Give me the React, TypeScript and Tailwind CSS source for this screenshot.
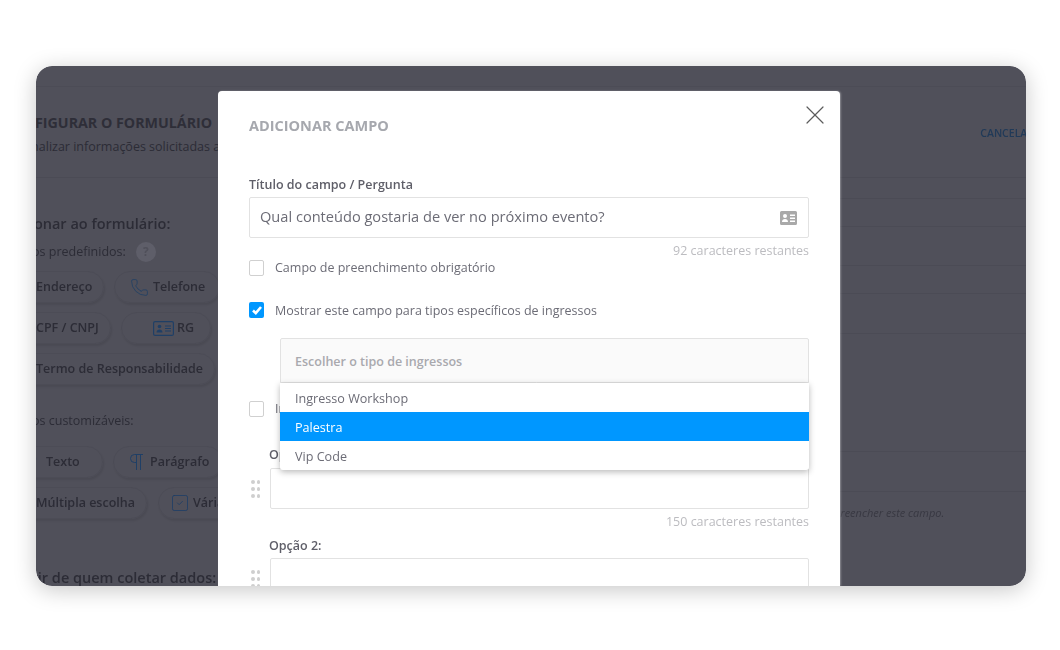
import { Phone, SquareCheck, Type, X } from 'lucide-react';
import type { ReactNode } from 'react';

const IdCard = ({ className }: { className?: string }) => (
  <svg viewBox="0 0 17 14" className={className}>
    <path
      fill="currentColor"
      fillRule="evenodd"
      d="M1.5 0h14A1.5 1.5 0 0 1 17 1.5v11a1.5 1.5 0 0 1-1.5 1.5h-14A1.5 1.5 0 0 1 0 12.5v-11A1.5 1.5 0 0 1 1.5 0ZM5 3a2 2 0 1 0 0 4 2 2 0 0 0 0-4ZM2 11h6c0-2-1.200-3-3-3s-3 1-3 3Zm8-7.500V5h5V3.500h-5ZM10 6.500V8h5V6.500h-5ZM10 9.500V11h5V9.500h-5Z"
    />
  </svg>
);

const IdCardOutline = () => (
  <svg viewBox="0 0 21 15" className="h-[15px] w-[21px] text-[#1f3f66]" fill="none" stroke="currentColor">
    <rect x="0.6" y="0.6" width="19.800" height="13.800" rx="1.500" strokeWidth="1.200" />
    <circle cx="6.500" cy="5.500" r="1.800" fill="currentColor" stroke="none" />
    <path d="M3.500 11.500c0-2 1.300-3 3-3s3 1 3 3z" fill="currentColor" stroke="none" />
    <path d="M12 5h6M12 7.500h6M12 10h6" strokeWidth="1.100" />
  </svg>
);

const PilcrowThin = () => (
  <svg viewBox="0 0 13 16" className="h-[16px] w-[13px] text-[#1f3f66]" fill="none" stroke="currentColor" strokeWidth="1">
    <path d="M13 .5H4.500a4 4 0 0 0 0 8H6.500M6.500 .5V16M10.500 .5V16" />
  </svg>
);

const Pill = ({ children, className }: { children: ReactNode; className: string }) => (
  <div
    className={`flex h-[32px] shrink-0 items-center rounded-full border border-[#4c4c56] text-[12.500px] font-semibold whitespace-nowrap shadow-[1px_2px_2px_rgba(0,0,0,0.08)] ${className}`}
  >
    {children}
  </div>
);

const DragDots = () => (
  <div className="grid w-[9px] shrink-0 grid-cols-2 gap-x-[2px] gap-y-[3px]">
    {Array.from({ length: 6 }).map((_, i) => (
      <span key={i} className="h-[4px] w-[3.500px] rounded-full bg-[#cfcfcf]" />
    ))}
  </div>
);

const Checkbox = ({ checked }: { checked?: boolean }) =>
  checked ? (
    <span className="flex h-[16px] w-[15px] shrink-0 items-center justify-center rounded-[2px] bg-[#0097ff]">
      <svg viewBox="0 0 12 12" className="h-[12px] w-[12px]" fill="none" stroke="#fff" strokeWidth="2.600">
        <path d="M2 6.500 4.800 9.200 10 3" />
      </svg>
    </span>
  ) : (
    <span className="h-[16px] w-[15px] shrink-0 rounded-[2px] border border-[#d0d0d0] bg-white" />
  );

const Background = () => (
  <div className="flex h-full flex-col bg-[#50505a] text-[#2c2c36] blur-[0.5px]">
    <div className="h-[21px] shrink-0 border-b border-[#4c4c56]" />
    <div className="flex h-[91px] shrink-0 items-start justify-between border-b border-[#4b4b55] pt-[26px]">
      <div className="overflow-hidden">
        <p className="-ml-[33px] whitespace-nowrap text-[14.250px] leading-[20px] font-bold text-[#2e2e38]">
          CONFIGURAR O FORMULÁRIO
        </p>
        <p className="-ml-[38px] mt-[5px] whitespace-nowrap text-[12.500px] leading-[18px]">
          Personalizar informações solicitadas aos participantes
        </p>
      </div>
      <span className="mt-[13px] -mr-[8px] text-[10.500px] leading-[14px] font-semibold text-[#213a58]">CANCELAR</span>
    </div>

    <div className="flex min-h-0 flex-1">
      <div className="w-[182px] shrink-0 overflow-hidden">
        <p className="-ml-[36px] mt-[35px] whitespace-nowrap text-[14.500px] leading-[22px] font-semibold">
          Adicionar ao formulário:
        </p>
        <div className="mt-[7px] flex items-center gap-[10px]">
          <p className="-ml-[38px] whitespace-nowrap text-[12.500px] leading-[20px]">Campos predefinidos:</p>
          <span className="flex h-[20px] w-[20px] items-center justify-center rounded-full bg-[#5e5e69] text-[12px] font-bold text-[#50505a]">
            ?
          </span>
        </div>
        <div className="-ml-[30px] mt-[9px] flex gap-[10px]">
          <Pill className="w-[98px] pl-[29px]">Endereço</Pill>
          <Pill className="w-[106px] gap-[4px] pl-[15px]">
            <Phone className="h-[19px] w-[19px] shrink-0 text-[#1f3f66]" strokeWidth={1} />
            Telefone
          </Pill>
        </div>
        <div className="-ml-[30px] mt-[9px] flex gap-[10px]">
          <Pill className="w-[105px] pl-[29px]">CPF / CNPJ</Pill>
          <Pill className="w-[90px] gap-[3px] pl-[31px]">
            <IdCardOutline />
            RG
          </Pill>
        </div>
        <div className="-ml-[30px] mt-[9px] flex">
          <Pill className="w-[209px] pl-[29px]">Termo de Responsabilidade</Pill>
        </div>
        <p className="-ml-[38px] mt-[26px] whitespace-nowrap text-[12.500px] leading-[20px]">Campos customizáveis:</p>
        <div className="-ml-[30px] mt-[15px] flex gap-[10px]">
          <Pill className="w-[97px] gap-[8px] pl-[17px]">
            <Type className="h-[14px] w-[14px] shrink-0 text-[#1f3f66]" strokeWidth={1.300} />
            Texto
          </Pill>
          <Pill className="w-[110px] gap-[7px] pl-[16px]">
            <PilcrowThin />
            Parágrafo
          </Pill>
        </div>
        <div className="-ml-[30px] mt-[9px] flex gap-[11px]">
          <Pill className="w-[141px] pl-[29px]">Múltipla escolha</Pill>
          <Pill className="w-[130px] gap-[3px] pl-[11px]">
            <SquareCheck className="h-[20px] w-[20px] shrink-0 text-[#1f3f66]" strokeWidth={1} />
            Várias opções
          </Pill>
        </div>
        <p className="-ml-[41px] mt-[48px] whitespace-nowrap text-[14.500px] leading-[22px] font-semibold">
          A partir de quem coletar dados:
        </p>
      </div>

      <div className="min-w-0 flex-1 overflow-hidden">
        <div className="h-[21px] border-b border-[#4b4b55]" />
        <div className="h-[28px] border-b border-[#4b4b55]" />
        <div className="h-[39px] border-b border-[#4b4b55]" />
        <div className="h-[28px] border-b border-[#4b4b55]" />
        <div className="h-[40px] border-b border-[#4b4b55]" />
        <div className="h-[118px] border-b border-[#4b4b55]" />
        <div className="h-[40px] border-b border-[#4b4b55]" />
        <p className="mt-[13px] ml-[527px] text-[11px] leading-[16px] whitespace-nowrap text-[#383842] italic">
          Não é obrigatório preencher este campo.
        </p>
      </div>
    </div>
  </div>
);

const CharCount = ({ children }: { children: ReactNode }) => (
  <p className="mt-[4px] text-right text-[12.500px] leading-[17px] text-[#bcbcc0]">{children}</p>
);

const Modal = () => (
  <div className="absolute top-[25px] bottom-0 left-[182px] w-[622px] overflow-hidden rounded-t-[4px] bg-white px-[31px] text-[#6c6c76] shadow-[1px_0_2px_rgba(255,255,255,0.35)]">
    <X className="absolute top-[8px] right-[9px] h-[32px] w-[32px] text-[#5c5c5c]" strokeWidth={0.900} />

    <h2 className="mt-[24px] pt-[1px] text-[14.500px] leading-[19px] font-bold text-[#a6a8ae]">ADICIONAR CAMPO</h2>

    <label className="mt-[41px] block text-[12.500px] leading-[18px] font-semibold text-[#5e5e68]">
      Título do campo / Pergunta
    </label>
    <div className="mt-[3px] flex h-[41px] items-center justify-between rounded-[2px] border border-[#e2e2e2] pr-[11px] pl-[10px] text-[14.600px]">
      <span className="pb-[2px]">Qual conteúdo gostaria de ver no próximo evento?</span>
      <IdCard className="h-[14px] w-[17px] text-[#a9a9a9]" />
    </div>
    <CharCount>92 caracteres restantes</CharCount>

    <div className="flex items-center gap-[11px] text-[12.500px] leading-[18px]">
      <Checkbox />
      Campo de preenchimento obrigatório
    </div>
    <div className="mt-[24px] flex h-[18px] items-center gap-[11px] text-[12.500px] leading-[18px]">
      <Checkbox checked />
      <span className="-mb-[1px]">Mostrar este campo para tipos específicos de ingressos</span>
    </div>

    <div className="relative mt-[19px] ml-[31px]">
      <div className="flex h-[45px] items-center rounded-t-[2px] border border-[#e2e2e2] bg-[#fafafa] pt-[3px] pl-[14px] text-[12.500px] font-semibold text-[#a9a9ae]">
        Escolher o tipo de ingressos
      </div>
      <div className="absolute top-[45px] right-0 left-0 z-10 rounded-b-[3px] bg-white text-[12.600px] shadow-[0_2px_6px_rgba(0,0,0,0.28)]">
        <div className="flex h-[29px] items-center pt-[4px] pl-[15px]">Ingresso Workshop</div>
        <div className="flex h-[29px] items-center bg-[#0097ff] pt-[4px] pl-[15px] text-white">Palestra</div>
        <div className="flex h-[29px] items-center pt-[4px] pl-[15px]">Vip Code</div>
      </div>
    </div>

    <div className="mt-[17px] flex items-center gap-[11px] text-[12.500px] leading-[18px]">
      <Checkbox />
      Incluir opção "Outro"
    </div>

    <div className="mt-[28px] ml-[20px] text-[12.500px] leading-[18px] font-semibold text-[#5e5e68]">Opção 1:</div>
    <div className="mt-[4px] flex items-center gap-[10px]">
      <div className="flex w-[11px] justify-end">
        <DragDots />
      </div>
      <div className="h-[41px] flex-1 rounded-[2px] border border-[#e2e2e2]" />
    </div>
    <CharCount>150 caracteres restantes</CharCount>

    <div className="mt-[7px] ml-[20px] text-[12.500px] leading-[18px] font-semibold text-[#5e5e68]">Opção 2:</div>
    <div className="mt-[3px] flex items-center gap-[10px]">
      <div className="flex w-[11px] justify-end">
        <DragDots />
      </div>
      <div className="h-[41px] flex-1 rounded-[2px] border border-[#e2e2e2]" />
    </div>
  </div>
);

export default function App() {
  return (
    <div className="h-[650px] w-[1060px] overflow-hidden bg-white pt-[66px] pl-[36px] font-['Open_Sans',sans-serif]">
      <div className="relative h-[520px] w-[990px] overflow-hidden rounded-[16px] shadow-[0_4px_22px_rgba(0,0,0,0.22)]">
        <Background />
        <Modal />
      </div>
    </div>
  );
}
